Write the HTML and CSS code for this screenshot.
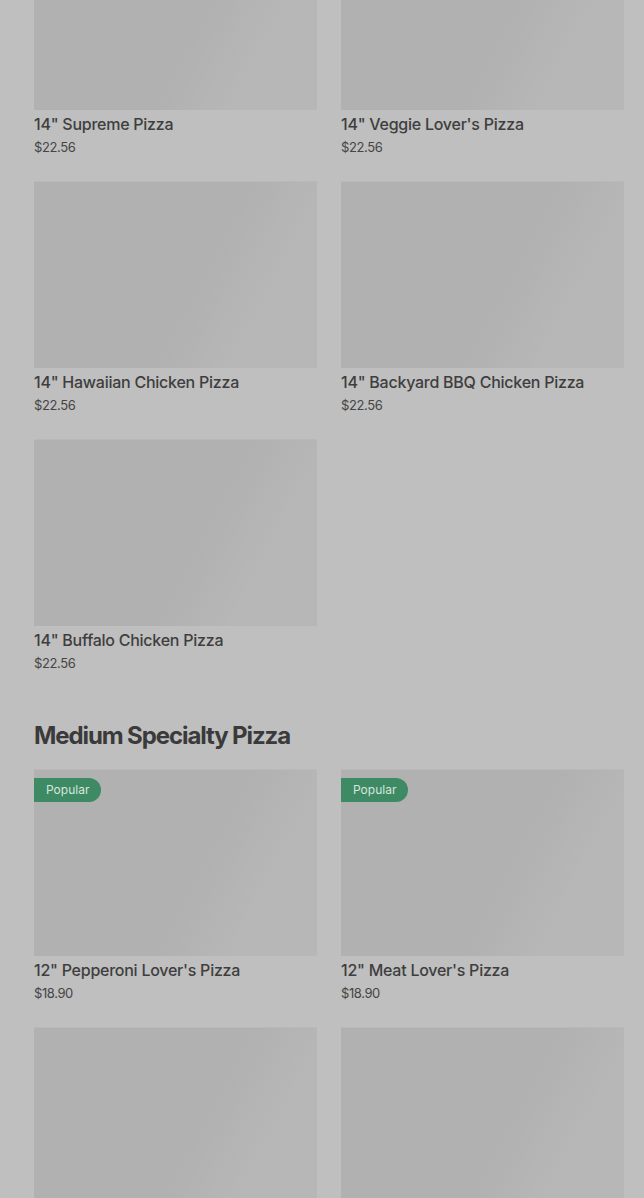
FILE: index.html
```html
<!DOCTYPE html>
<html lang="en">
  <head>
    <meta charset="UTF-8" />
    <meta name="viewport" content="width=device-width, initial-scale=1.0" />
    <title>Menu</title>
    <link rel="stylesheet" href="styles.css">
  </head>
  <body>
    <div class="menu">
      <section class="section">
        <div class="grid">
          <div class="item">
            <div class="photo"></div>
            <div class="name">14" Supreme Pizza</div>
            <div class="price">$22.56</div>
          </div>
          <div class="item">
            <div class="photo"></div>
            <div class="name">14" Veggie Lover's Pizza</div>
            <div class="price">$22.56</div>
          </div>
          <div class="item">
            <div class="photo"></div>
            <div class="name">14" Hawaiian Chicken Pizza</div>
            <div class="price">$22.56</div>
          </div>
          <div class="item">
            <div class="photo"></div>
            <div class="name">14" Backyard BBQ Chicken Pizza</div>
            <div class="price">$22.56</div>
          </div>
          <div class="item">
            <div class="photo"></div>
            <div class="name">14" Buffalo Chicken Pizza</div>
            <div class="price">$22.56</div>
          </div>
        </div>
      </section>

      <section class="section">
        <h2 class="section-title">Medium Specialty Pizza</h2>
        <div class="grid">
          <div class="item">
            <div class="photo">
              <span class="badge">Popular</span>
            </div>
            <div class="name">12" Pepperoni Lover's Pizza</div>
            <div class="price">$18.90</div>
          </div>
          <div class="item">
            <div class="photo">
              <span class="badge">Popular</span>
            </div>
            <div class="name">12" Meat Lover's Pizza</div>
            <div class="price">$18.90</div>
          </div>
          <!-- next row, cut off by the viewport -->
          <div class="item">
            <div class="photo"></div>
          </div>
          <div class="item">
            <div class="photo"></div>
          </div>
        </div>
      </section>
    </div>
  </body>
</html>
```

FILE: styles.css
```css
body {
  margin: 0;
  background-color: #bfbfbf;
  font-family: Inter, "Noto Sans", sans-serif;
  color: #3d3d3d;
  overflow: hidden;
}
.menu {
  margin-top: -77px;
  padding: 0 20px 0 34px;
}
.section + .section {
  margin-top: 47px;
}
.section-title {
  margin: 0 0 17px;
  font-size: 24px;
  line-height: 32px;
  font-weight: 700;
  letter-spacing: -1.1px;
  color: #3a3a3a;
}
.grid {
  display: grid;
  grid-template-columns: 283px 283px;
  column-gap: 24px;
  row-gap: 24px;
}
.photo {
  position: relative;
  height: 187px;
  background: linear-gradient(118deg, #b1b1b1 58%, #b7b7b7 78%);
  border-top: 1px solid #b9b9b9;
  box-sizing: border-box;
}
.badge {
  position: absolute;
  top: 8px;
  left: 0;
  height: 24px;
  padding: 0 12px;
  line-height: 24px;
  font-size: 12px;
  color: #d6e6dc;
  background-color: #3e8a64;
  border-radius: 0 12px 12px 0;
}
.name {
  margin-top: 4px;
  font-size: 16px;
  line-height: 20px;
  font-weight: 500;
  letter-spacing: -0.25px;
  color: #3e3e3e;
}
.price {
  margin-top: 3px;
  font-size: 13px;
  line-height: 20px;
  color: #454545;
  letter-spacing: -0.4px;
}
```
